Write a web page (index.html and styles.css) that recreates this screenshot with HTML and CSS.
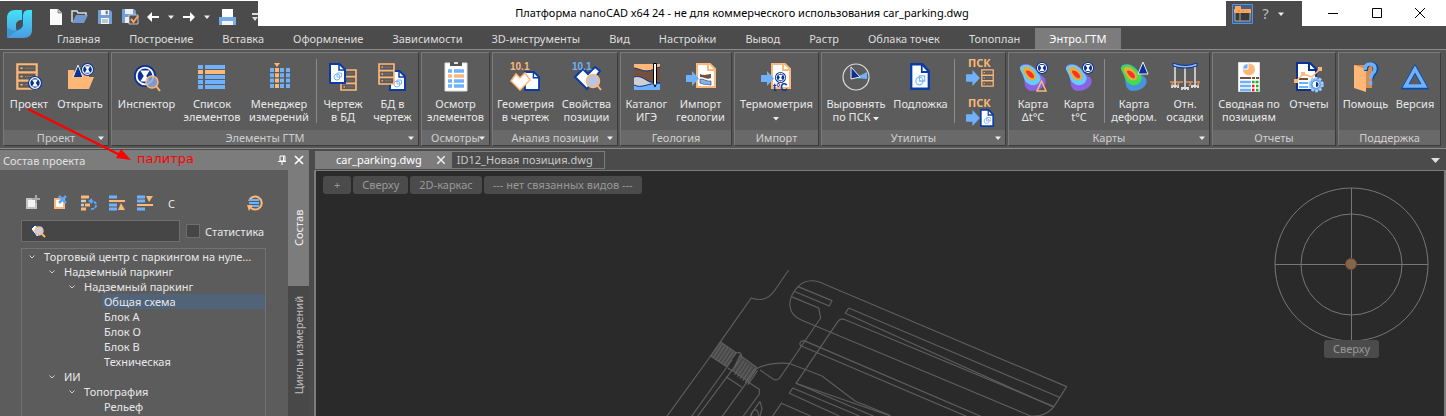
FILE: index.html
```html
<!DOCTYPE html>
<html lang="ru">
<head>
<meta charset="utf-8">
<title>Платформа nanoCAD x64 24</title>
<link rel="stylesheet" href="styles.css">
</head>
<body>
<svg class="sprite" aria-hidden="true">
  <symbol id="glass" viewBox="0 0 14 14"><circle cx="7" cy="7" r="7" fill="#0a3296"/><circle cx="7" cy="7" r="5.3" fill="#0a3296" stroke="#fff" stroke-width="1.2"/><path d="M4 3.5h6L7.8 7 10 10.500H4L6.200 7z" fill="#fff"/></symbol>
  <symbol id="drawers" viewBox="0 0 20 26" preserveAspectRatio="none"><path d="M1.200 1.200h17.600v23.600H1.200zM1 9h18M1 17h18" fill="#5c5c5c" stroke="#fdb777" stroke-width="2"/><path d="M4 5h2M4 13h2M4 21h2" stroke="#fdb777" stroke-width="1.500"/><path d="M8 5h8M8 13h8M8 21h8" stroke="#8a7360" stroke-width="1"/></symbol>
  <symbol id="sheet" viewBox="0 0 17 21" preserveAspectRatio="none"><path d="M1 1h9.500L16 6.500V20H1z" fill="#fff" stroke="#0a3ca5" stroke-width="2"/><path d="M10 1v6h6" fill="none" stroke="#0a3ca5" stroke-width="1.500"/></symbol>
  <symbol id="plot" viewBox="0 0 17 21" preserveAspectRatio="none"><use href="#sheet" width="17" height="21"/><circle cx="8" cy="14" r="3" fill="none" stroke="#7ab6ff"/><path d="M8 14v-4h4.500v4z" fill="none" stroke="#7ab6ff"/></symbol>
  <symbol id="arrow" viewBox="0 0 13 15"><path d="M0 4h6V0l7 7.500L6 15v-4H0z" fill="#6fb1fb"/></symbol>
  <symbol id="tri" viewBox="0 0 6 4"><path d="M0 .5h6L3 4z" fill="#eee"/></symbol>
  <symbol id="blob" viewBox="0 0 30 30"><path class="b1" d="M3 2C9-1 16 3 20 9c3 5 9 5 8 11s-8 9-15 9c-6-1-7-7-7-12C5 11-1 6 3 2z"/><path class="b2" d="M3 3c6-3 12 0 16 6 4 5 5 6 3 10s-8 5-11 3c-6-4-5-7-7-11S0 5 3 3z"/><path d="M5 5c5-3 8 1 12 5 3 4 1 8-3 8-5 0-5-4-8-7-2-2-2-5-1-6z" fill="#e6ae38"/><path d="M8 8c3-1 8 3 8 6s-3 2-5 0-4-5-3-6z" fill="#f4332b"/></symbol>
  <symbol id="chev" viewBox="0 0 8 6"><path d="M1.500 1.500 4 4l2.500-2.500" fill="none" stroke="#d0d0d0"/></symbol>
</svg>

<header class="titlebar">
  <div class="quick">
    <button aria-label="Создать"><svg width="14" height="18" viewBox="0 0 14 18"><path d="M1 1h8l4 4v12H1z" fill="#fafafa"/><path d="M9 1v4h4" fill="#bbb" stroke="#777" stroke-width=".7"/></svg></button>
    <button aria-label="Открыть файл"><svg width="18" height="16" viewBox="0 0 18 16"><path d="M1 13V2h5l1 2h8v3" fill="none" stroke="#ddd" stroke-width="1.500"/><path d="M1 14 5 6h12l-4 8z" fill="#7098ca"/></svg></button>
    <button aria-label="Сохранить"><svg width="16" height="16" viewBox="0 0 16 16"><path d="M1 1h12l2 2v12H1z" fill="#719fd9"/><path d="M4 1h8v5H4zM4 9h8v6H4z" fill="#f5f5f5"/><path d="M9 2h1.500v3H9zM5 11h6M5 13h6" fill="#345" stroke="#89a"/></svg></button>
    <button aria-label="Сохранить как"><svg width="18" height="18" viewBox="0 0 18 18"><path d="M1 1h12l2 2v12H1z" fill="#719fd9"/><path d="M4 1h8v5H4zM4 9h5v6H4z" fill="#eee"/><path d="M8 7h9v9H8z" fill="#505050" stroke="#ddd" stroke-width=".8"/><path d="m10 11 2.500 3L17 8" fill="none" stroke="#f4a45f" stroke-width="2"/></svg></button>
    <button aria-label="Отменить"><svg width="12" height="10" viewBox="0 0 12 10"><path d="M12 4H5V0L0 5l5 5V6h7z" fill="#fff"/></svg></button>
    <button aria-label="Список отмены"><svg width="6" height="4"><use href="#tri"/></svg></button>
    <button aria-label="Повторить"><svg width="12" height="10" viewBox="0 0 12 10"><path d="M0 4h7V0l5 5-5 5V6H0z" fill="#fff"/></svg></button>
    <button aria-label="Список повтора"><svg width="6" height="4"><use href="#tri"/></svg></button>
    <button aria-label="Печать"><svg width="17" height="17" viewBox="0 0 17 17"><path d="M3 0h11v8H3z" fill="#fff"/><path d="M0 8h17v8H0z" fill="#78a9e8"/><path d="M3 12h11v4H3z" fill="#f4f4f4"/></svg></button>
    <button class="more" aria-label="Настроить панель"><svg width="6" height="8" viewBox="0 0 6 8"><path d="M0 0h6v2H0zM0 4h6L3 8z" fill="#ddd"/></svg></button>
  </div>
  <h1>Платформа nanoCAD x64 24 - не для коммерческого использования car_parking.dwg</h1>
  <div class="helpbox">
    <button aria-label="Вид ленты"><svg width="21" height="20" viewBox="0 0 21 20"><path d="M.5.5h20v19H.5z" fill="#4b5d78" stroke="#4c93f0"/><path d="M3 8h15v9H3zM8 8v9" fill="#3a3a3a" stroke="#aaa"/><path d="M2 5h17v4H2zM3 2h6v3H3z" fill="#fba760"/><path d="M6 7h9" stroke="#b86" stroke-dasharray="2"/></svg></button>
    <button class="ask" aria-label="Справка">?</button>
    <button aria-label="Меню справки"><svg width="6" height="4"><use href="#tri"/></svg></button>
  </div>
  <div class="winctl">
    <button aria-label="Свернуть"><svg width="12" height="12"><path d="M1 6.500h10" stroke="#000"/></svg></button>
    <button aria-label="Развернуть"><svg width="12" height="12"><path d="M1.500 1.500h9v9h-9z" fill="none" stroke="#000"/></svg></button>
    <button aria-label="Закрыть"><svg width="12" height="12"><path d="m1 1 10 10M11 1 1 11" stroke="#000"/></svg></button>
  </div>
</header>

<nav class="menu">
  <svg class="logo" width="26" height="28" viewBox="0 0 26 28"><defs><linearGradient id="lg" x1="0" y1="0" x2="0" y2="28" gradientUnits="userSpaceOnUse"><stop offset="0" stop-color="#43e2f7"/><stop offset="1" stop-color="#4c9ae0"/></linearGradient></defs><path d="M8 0h7v10c-4 0-6 2-6 5v3c0 2 1 3 2 4L0 28V8c0-5 3-8 8-8z" fill="url(#lg)"/><path d="M0 28h16c6 0 9-3 9-8V0h-3c-4 0-6 2-6 6v8c0 3-2 5-5 6z" fill="url(#lg)"/><path d="m15 0 1 6v8c0 3-2 5-5 6l-2-2h2c3 0 4-2 4-5z" fill="#1f5f94"/><path d="m11 20-11 8V17c3 3 7 4 11 3z" fill="#2f86c0" opacity=".5"/></svg>
  <a href="#">Главная</a><a href="#">Построение</a><a href="#">Вставка</a><a href="#">Оформление</a><a href="#">Зависимости</a><a href="#">3D-инструменты</a><a href="#">Вид</a><a href="#">Настройки</a><a href="#">Вывод</a><a href="#">Растр</a><a href="#">Облака точек</a><a href="#">Топоплан</a><a href="#" class="on">Энтро.ГТМ</a>
</nav>

<div class="ribbon">
  <section class="group">
    <div class="tools g-project">
      <button><svg class="ico" viewBox="0 0 30 30"><use href="#drawers" x="2" y="1" width="22" height="27"/><use href="#glass" x="14" y="14" width="14" height="14"/></svg>Проект</button>
      <button><svg class="ico" viewBox="0 0 30 30"><path d="M3 27V8h6l1 3h14v5" fill="#fdb777"/><path d="m7 18 6-15 6 15z" fill="#0a3296" stroke="#eee"/><use href="#glass" x="16" y="1" width="13" height="13"/><path d="M3 27 8 15h21l-5 12z" fill="#fdb777"/></svg>Открыть</button>
    </div>
    <h2>Проект<svg class="dd" width="6" height="4"><use href="#tri"/></svg></h2>
  </section>
  <section class="group">
    <div class="tools g-elements">
      <button><svg class="ico" viewBox="0 0 30 30"><use href="#glass" x="3" y="3" width="22" height="22"/><circle cx="21" cy="20" r="6" fill="#8ea6d8" fill-opacity=".85" stroke="#fdb777" stroke-width="1.500"/><path d="m25 24 4 5" stroke="#fdb777" stroke-width="2"/></svg>Инспектор</button>
      <button><svg class="ico" viewBox="0 0 30 30"><path d="M1 5h5m2 0h20M1 15h5m2 0h20M1 20h5m2 0h20M1 25h5m2 0h20" stroke="#6fb1fb" stroke-width="4"/><path d="M1 10h5m2 0h20" stroke="#fdb777" stroke-width="4"/></svg>Список<br>элементов</button>
      <button><svg class="ico" viewBox="0 0 30 30"><path d="M8 6v20M18 6v20M24 6v20" stroke="#6fb1fb" stroke-width="4" stroke-dasharray="4 1.300"/><path d="M13 6v20" stroke="#fdb777" stroke-width="4" stroke-dasharray="4 1.300"/><path d="M10 1h6l-3 4z" fill="#fdb777"/></svg>Менеджер<br>измерений</button>
      <i class="sep"></i>
      <button><svg class="ico" viewBox="0 0 30 30"><use href="#drawers" x="12" y="7" width="17" height="22"/><use href="#plot" x="1" y="1" width="17" height="21"/></svg>Чертеж<br>в БД</button>
      <button><svg class="ico" viewBox="0 0 30 30"><use href="#plot" x="12" y="8" width="17" height="21"/><use href="#drawers" x="1" y="1" width="17" height="22"/></svg>БД в<br>чертеж</button>
    </div>
    <h2>Элементы ГТМ<svg class="dd" width="6" height="4"><use href="#tri"/></svg></h2>
  </section>
  <section class="group">
    <div class="tools">
      <button><svg class="ico" viewBox="0 0 30 30"><path d="M4 1h22v28H4z" fill="#fff" stroke="#ddd"/><path d="M9 0h12v4H9z" fill="#555"/><path d="M13 0h4v2h-4z" fill="#ddd"/><path d="M7 9h4m2 0h10M7 19h4m2 0h10M7 24h4m2 0h10" stroke="#6fb1fb" stroke-width="3.500"/><path d="M7 14h4m2 0h10" stroke="#fdb777" stroke-width="3.500"/></svg>Осмотр<br>элементов</button>
    </div>
    <h2>Осмотры<svg class="dd" width="6" height="4"><use href="#tri"/></svg></h2>
  </section>
  <section class="group">
    <div class="tools g-analysis">
      <button><svg class="ico" viewBox="0 0 30 30"><use href="#sheet" x="14" y="9" width="16" height="20"/><path d="m1 19 5-7 4 4 5-5 5 7-10 10z" fill="#fff" stroke="#fdb777" stroke-width="1.500"/><text x="0" y="8" class="num or">10.1</text></svg>Геометрия<br>в чертеж</button>
      <button><svg class="ico" viewBox="0 0 30 30"><path d="m3 15 8-8 5 5 7-7 5 4-13 18z" fill="#fff" stroke="#0a3ca5" stroke-width="2"/><text x="0" y="8" class="num bl">10.1</text><circle cx="21" cy="19" r="6.500" fill="#b8c6e4" stroke="#fdb777" stroke-width="1.500"/><path d="m25 23 4 5" stroke="#fdb777" stroke-width="2"/></svg>Свойства<br>позиции</button>
    </div>
    <h2>Анализ позиции<svg class="dd" width="6" height="4"><use href="#tri"/></svg></h2>
  </section>
  <section class="group">
    <div class="tools g-geology">
      <button><svg class="ico" viewBox="0 0 30 30"><path d="M2 2h26v10H2z" fill="#fdb777"/><path d="M2 6c6 1 8 3 13 3s8-3 13-4v14H2z" fill="#74513a"/><path d="M2 15c7-2 11 3 16 5l10 1v7H2z" fill="#d0d0d0"/><path d="M2 23c8 4 13-2 26-2v7H2z" fill="#6fb1fb"/><path d="M2 6c6 1 8 3 13 3s8-3 13-4M2 15c7-2 11 3 16 5l10 1M2 23c8 4 13-2 26-2" fill="none" stroke="#0a3296"/><path d="M21.500 1.500h3v20L23 25l-1.500-3.500z" fill="#fff" stroke="#000"/></svg>Каталог<br>ИГЭ</button>
      <button><svg class="ico" viewBox="0 0 30 30"><path d="M11 2h13l5 5v18H11z" fill="#fff" stroke="#fdb777" stroke-width="2"/><path d="M22 2v6h6" fill="none" stroke="#fdb777" stroke-width="2"/><path d="M14 12c5 2 7 0 11 0v4c-4 2-7-1-11-1z" fill="#74513a"/><path d="M14 17c5 0 7 3 11 2v4c-4-1-7 0-11-2z" fill="#8fb5dc" stroke="#0a3296" stroke-width=".6"/><use href="#arrow" x="0" y="8" width="13" height="17"/></svg>Импорт<br>геологии</button>
    </div>
    <h2>Геология</h2>
  </section>
  <section class="group">
    <div class="tools">
      <button><svg class="ico" viewBox="0 0 30 30"><path d="M11 2h13l5 5v19H11z" fill="#fff" stroke="#fdb777" stroke-width="2"/><path d="M22 2v6h6" fill="none" stroke="#fdb777" stroke-width="2"/><use href="#arrow" x="0" y="8" width="13" height="17"/><use href="#glass" x="14" y="10" width="11" height="11"/><text x="12" y="29" class="num nv">t°C</text></svg>Термометрия<br><svg width="6" height="5"><use href="#tri"/></svg></button>
    </div>
    <h2>Импорт</h2>
  </section>
  <section class="group">
    <div class="tools g-utils">
      <button><svg class="ico" viewBox="0 0 30 30"><circle cx="15" cy="15" r="13" fill="none" stroke="#ddd" stroke-width="1.200"/><path d="m14 16 12-6v7z" fill="#6fb1fb"/><path d="m10 5 9 10-9 2z" fill="#0a3296" stroke="#eee"/></svg>Выровнять<br>по ПСК <svg width="6" height="5"><use href="#tri"/></svg></button>
      <button><svg class="ico" viewBox="0 0 30 30"><use href="#plot" x="5" y="1" width="20" height="27"/></svg>Подложка</button>
      <i class="sep"></i>
      <div class="pair">
        <button aria-label="ПСК в БД"><svg width="30" height="32" viewBox="0 0 30 32"><text x="3" y="11" class="psk">ПСК</text><use href="#drawers" x="16" y="13" width="13" height="18"/><use href="#arrow" x="1" y="14" width="14" height="16"/></svg></button>
        <button aria-label="ПСК в чертеж"><svg width="30" height="32" viewBox="0 0 30 32"><text x="3" y="11" class="psk">ПСК</text><use href="#plot" x="15" y="13" width="14" height="18"/><use href="#arrow" x="1" y="14" width="14" height="16"/></svg></button>
      </div>
    </div>
    <h2>Утилиты<svg class="dd" width="6" height="4"><use href="#tri"/></svg></h2>
  </section>
  <section class="group">
    <div class="tools g-maps">
      <button><svg class="ico cool" viewBox="0 0 30 30"><use href="#blob" x="0" y="1" width="30" height="29"/><use href="#glass" x="18" y="0" width="12" height="12"/><path d="m23.500 19 4.500 10h-9z" fill="none" stroke="#fdb777" stroke-width="1.500"/></svg>Карта<br>Δt°C</button>
      <button><svg class="ico cool" viewBox="0 0 30 30"><use href="#blob" x="0" y="1" width="30" height="29"/><use href="#glass" x="18" y="0" width="12" height="12"/></svg>Карта<br>t°C</button>
      <i class="sep"></i>
      <button><svg class="ico warm" viewBox="0 0 30 30"><use href="#blob" x="0" y="1" width="30" height="29"/><path d="m24 0 5 12H19z" fill="#0a3296" stroke="#eee"/></svg>Карта<br>деформ.</button>
      <button><svg class="ico" viewBox="0 0 30 30"><path d="M5 2v24M15 4v24M25 2v24" stroke="#c4c4c4" stroke-width="2"/><path d="M3 1q12 5 24 0v3q-12 4-24 0z" fill="#8fbfff" stroke="#0a3296"/><path d="M2 26v-2h6v2M12 28v-2h6v2M22 26v-2h6v2" fill="none" stroke="#ddd" stroke-width="2"/><path d="M0 20h4m2 0h7m3 0h7m3 0h4M1 24l2-3m4 3 2-3m10 3 2-3m6 3 2-3" stroke="#d8935a" stroke-width="1.500"/></svg>Отн.<br>осадки</button>
    </div>
    <h2>Карты<svg class="dd" width="6" height="4"><use href="#tri"/></svg></h2>
  </section>
  <section class="group">
    <div class="tools g-reports">
      <button><svg class="ico" viewBox="0 0 30 30"><path d="M4.500.5h21v29h-21z" fill="#fff" stroke="#ddd"/><circle cx="15" cy="7.500" r="6" fill="#fdb777"/><path d="M14 7V1.500A6 6 0 0 0 8.500 7z" fill="#6fb1fb" stroke="#fff"/><path d="M6 16h11m1 0h3m1 0h3" stroke="#74513a" stroke-width="2"/><path d="M6 20h11M6 24h11M6 28h11" stroke="#6fb1fb" stroke-width="2.500"/><path d="M18 20h2.500m1 0h3M22 24h2.500M22 28h2.500" stroke="#1fae2f" stroke-width="2.500"/><path d="M18 24h2.500m-2.500 4h2.500" stroke="#ef1b1b" stroke-width="2.500"/></svg>Сводная по<br>позициям</button>
      <button><svg class="ico" viewBox="0 0 30 30"><path d="M3 1h13l6 6v21H3z" fill="#fff" stroke="#0a3296" stroke-width="2"/><path d="M15 1v7h7" fill="none" stroke="#0a3296" stroke-width="2"/><path d="M5 17h9" stroke="#74513a" stroke-width="2"/><path d="M5 21h9M5 25h9" stroke="#6fb1fb" stroke-width="2"/><path d="m2 19 7-7 9 3 8-8" fill="none" stroke="#fdb777" stroke-width="1.500"/><path d="M0 17h4v4H0zM7 10h4v4H7zM24 5h4v4h-4z" fill="#fdb777"/><circle cx="22" cy="22.500" r="6.500" fill="#6fb1fb" stroke="#a9cfff" stroke-width="2.500" stroke-dasharray="2.500 1.600"/><circle cx="22" cy="22.500" r="4" fill="#fff" stroke="#4e94e8"/><path d="M22 20a2.500 2.500 0 0 1 0 5z" fill="#0a3296"/></svg>Отчеты</button>
    </div>
    <h2>Отчеты</h2>
  </section>
  <section class="group">
    <div class="tools g-support">
      <button><svg class="ico" viewBox="0 0 30 30"><path d="M4 3h18v23H4z" fill="#d98d4a"/><path d="m4 3 12 4v23L4 26z" fill="#fdb777"/><path d="M16 9q0-7 5-7 5.500 0 5.500 5c0 4-4.500 4-4.500 10" fill="none" stroke="#0a4aac" stroke-width="4"/><path d="M15 8q0-6 5-6 5 0 5 5c0 4-4.500 4-4.500 10m0 2v4" fill="none" stroke="#6fb1fb" stroke-width="3.500"/></svg>Помощь</button>
      <button><svg class="ico" viewBox="0 0 30 30"><path d="m15 7 10 18H5z" fill="none" stroke="#0a4aac" stroke-width="5"/><path d="m15 7 9.500 17h-19z" fill="none" stroke="#6fb1fb" stroke-width="3.500"/></svg>Версия</button>
    </div>
    <h2>Поддержка</h2>
  </section>
</div>

<main class="work">
  <aside class="palette">
    <div class="phead"><span>Состав проекта</span>
      <button aria-label="Закрепить"><svg width="10" height="10"><path d="M3 1h5v5H3zM6.500 1v5M1 6.500h8M5 7v3" fill="none" stroke="#fff"/></svg></button>
      <button aria-label="Закрыть палитру"><svg width="10" height="10"><path d="m1 1 8 8M9 1 1 9" stroke="#fff" stroke-width="1.600"/></svg></button>
    </div>
    <div class="pbody">
      <div class="pmain">
        <div class="ptools">
          <button aria-label="Добавить"><svg width="16" height="16" viewBox="0 0 16 16"><path d="M2 4h9v9H2z" fill="#f4f4f4" stroke="#c4c4c4" stroke-width="2"/><path d="M11 0v8M7 4h8" stroke="#aaa" stroke-width="2"/></svg></button>
          <button aria-label="Удалить"><svg width="16" height="16" viewBox="0 0 16 16"><path d="M2 4h9v9H2z" fill="#fff" stroke="#fdb777" stroke-width="2"/><path d="m6 1 7 7m0-7L6 8" stroke="#5ea6f5" stroke-width="2.500"/></svg></button>
          <button aria-label="Переместить"><svg width="16" height="16" viewBox="0 0 16 16"><path d="M0 2h8M4 10h5M0 14h5" stroke="#fdb777" stroke-width="3"/><path d="M0 6h5M0 10h3" stroke="#ccc" stroke-width="2.500"/><path d="M9 6q6 0 6 4t-5 4" fill="none" stroke="#5ea6f5" stroke-width="2" stroke-dasharray="3 1"/><path d="m7 6 4-3v6z" fill="#5ea6f5"/></svg></button>
          <button aria-label="Свернуть всё"><svg width="16" height="16" viewBox="0 0 16 16"><path d="M0 2h8M0 10h8M0 14h8" stroke="#6fb1fb" stroke-width="3"/><path d="M0 6h16" stroke="#fdb777" stroke-width="2"/><path d="m12 8 4 7H9z" fill="#fdb777"/></svg></button>
          <button aria-label="Развернуть всё"><svg width="16" height="16" viewBox="0 0 16 16"><path d="M0 2h8M0 6h8M0 14h8" stroke="#6fb1fb" stroke-width="3"/><path d="M0 10h16" stroke="#fdb777" stroke-width="2"/><path d="M9 1h7l-4 6z" fill="#fdb777"/></svg></button>
          <button class="c">C</button>
          <button class="sync" aria-label="Обновить"><svg width="16" height="16" viewBox="0 0 16 16"><path d="M2 6a6.500 6.500 0 1 1 1 6" fill="none" stroke="#fdb777" stroke-width="2"/><path d="m0 10 6 0-4 6z" fill="#fdb777"/><path d="M2 5h10M2 8h10M5 11h7" stroke="#6fb1fb" stroke-width="2"/></svg></button>
        </div>
        <div class="search">
          <div class="field"><svg width="16" height="14" viewBox="0 0 16 14"><path d="m1 5 4-4 3 2 4-1 2 4-7 7z" fill="#fff" stroke="#0a3ca5"/><circle cx="9" cy="7" r="4" fill="#c5cfe2" stroke="#fdb777" stroke-width="1.500"/><path d="m12 10 3 3" stroke="#fdb777" stroke-width="2"/></svg><input type="text" aria-label="Поиск"></div>
          <label><input type="checkbox">Статистика</label>
        </div>
        <ul class="tree">
          <li class="l0"><svg width="8" height="6"><use href="#chev"/></svg><span>Торговый центр с паркингом на нуле...</span></li>
          <li class="l1"><svg width="8" height="6"><use href="#chev"/></svg><span>Надземный паркинг</span></li>
          <li class="l2"><svg width="8" height="6"><use href="#chev"/></svg><span>Надземный паркинг</span></li>
          <li class="l3"><span class="sel">Общая схема</span></li>
          <li class="l3"><span>Блок А</span></li>
          <li class="l3"><span>Блок О</span></li>
          <li class="l3"><span>Блок В</span></li>
          <li class="l3"><span>Техническая</span></li>
          <li class="l1"><svg width="8" height="6"><use href="#chev"/></svg><span>ИИ</span></li>
          <li class="l2"><svg width="8" height="6"><use href="#chev"/></svg><span>Топография</span></li>
          <li class="l3"><span>Рельеф</span></li>
        </ul>
      </div>
      <div class="side"><button class="on">Состав</button><button>Циклы измерений</button></div>
    </div>
  </aside>

  <section class="docs">
    <div class="doctabs">
      <button class="on">car_parking.dwg<svg width="8" height="8"><path d="m0 0 8 8M8 0 0 8" stroke="#eee" stroke-width="1.500"/></svg></button>
      <button>ID12_Новая позиция.dwg</button>
      <svg class="list" width="9" height="5" viewBox="0 0 9 5"><path d="M0 0h9L4.500 5z" fill="#e0e0e0"/></svg>
    </div>
    <div class="canvas">
      <svg class="plan" aria-hidden="true">
        <g transform="translate(344 89) scale(.3333)" fill="none" stroke="#5e5e5e" stroke-width="3.500">
          <path d="m182 246 46 32-28 42-48-32zM240 286l50 36-26 42-46-32z" fill="#484848"/>
          <path d="M386 30 345 90Q318 130 274 114L182 244 152 288 20 470M264 366l34 22v14l-48 66M290 326 186 470M216 300 94 470M236 304 112 470M198 350l48 32M204 324l14 10"/>
          <path d="m188 250-28 42m36-36-28 42m36-36-28 42m36-36-28 42m36-36-28 42m60-14-28 42m36-36-28 42m36-36-28 42m36-36-28 42m36-36-28 42m36-36-28 42" stroke-width="4"/>
          <path d="M222 290c6-18 26-16 22 4l-20 30"/>
          <path d="M290 326Q330 306 386 310 440 330 486 348L586 424 690 466M300 330l40 28q10 4 18-2L482 174l-6-30-82-34"/>
          <path d="M1220 380 478 66Q438 54 414 80 386 110 390 140 394 168 424 180L1112 468Q1156 472 1182 440L1220 380zM414 80l102 42-8 16-106-44M566 144 1198 412M566 144l-10 16 626 282"/>
          <path d="M1182 440 552 178q-12-2-18 6L408 370 640 468"/>
          <path d="M432 242 965 470M424 258 922 470M432 242c-12 0-16 8-8 18M398 384 598 468M398 384l-10 16 150 68M408 370l284 98M452 468l-88-38-26 38M300 424l6 22-6 22M300 424l-30 42M274 468c4-20 20-28 22 0"/>
        </g>
      </svg>
      <div class="pills"><button>+</button><button>Сверху</button><button>2D-каркас</button><button>--- нет связанных видов ---</button></div>
      <div class="compass">
        <svg width="155" height="155" viewBox="0 0 155 155"><g fill="none" stroke="#777"><circle cx="77.500" cy="77.500" r="76.500"/><circle cx="77.500" cy="77.500" r="50.500"/><path d="M1 77.500h153M77.500 1v153"/></g><circle cx="77" cy="77" r="5.500" fill="#85664d" stroke="#6b4a30"/></svg>
        <button>Сверху</button>
      </div>
    </div>
  </section>

  <div class="note"><svg width="135" height="56" viewBox="0 0 135 56"><path d="m28 4 94 47" stroke="#f00" stroke-width="2.500"/><path d="m131 55-15-2 5-9z" fill="#f00"/></svg><span>палитра</span></div>
</main>
</body>
</html>
```
FILE: styles.css
```css
* { box-sizing: border-box; }
body {
  margin: 0; height: 100vh; display: flex; flex-direction: column; overflow: hidden;
  background: #4b4b4b; color: #e8e8e8;
  font: 11px/15px "Noto Sans", "Open Sans", sans-serif;
}
button { font: inherit; color: inherit; background: none; border: 0; padding: 0; margin: 0; }
a { color: inherit; text-decoration: none; }
h1, h2, ul { margin: 0; padding: 0; font: inherit; list-style: none; }
svg { flex: none; }
.sprite { position: absolute; width: 0; height: 0; }

.titlebar { display: flex; height: 26px; flex: none; padding-top: 1px; background: #fff; color: #000; }
.quick { display: flex; align-items: center; gap: 9px; width: 258px; padding: 7px 0 0 49px; background: #4b4b4b; }
.quick button { display: flex; margin-right: -1px; }
.quick button:nth-child(n+5) { margin-right: 0; }
.quick .more { margin-left: auto; }
.titlebar h1 { flex: 1; text-align: center; line-height: 23px; white-space: nowrap; }
.helpbox { display: flex; align-items: center; justify-content: space-between; width: 76px; padding: 0 18px 0 6px; background: #4b4b4b; }
.helpbox button { display: flex; }
.helpbox .ask { font-size: 15px; color: #bbb; }
.winctl { display: flex; align-items: center; justify-content: space-between; width: 144px; padding: 0 20px 2px 25px; }
.winctl button { display: flex; }

.menu { display: flex; flex: none; height: 23px; padding: 2px 0 0 42px; position: relative; }
.menu a { padding: 0 15px 0 14px; line-height: 21px; white-space: nowrap; color: #dedede; }
.menu a:first-of-type { padding-left: 15px; }
.menu .on { background: #7c7c7c; color: #fff; }
.logo { position: absolute; left: 7px; top: -16px; }

.ribbon {
  display: grid; flex: none; gap: 2px; padding: 2px 5px 2px 3px;
  grid-template-columns: 106fr 308fr 69fr 126fr 112fr 85fr 185fr 202fr 124fr 103fr;
  border-top: 1px solid #8c8c8c; border-bottom: 1px solid #8c8c8c; background: #555;
}
.group { display: flex; flex-direction: column; min-width: 0; background: #5c5c5c; border: 1px solid #7a7a7a; border-right: 1px solid #3c3c3c; border-bottom: 1px solid #3c3c3c; }
.tools { display: grid; grid-template-columns: minmax(0, 1fr); height: 77px; padding: 0 1px; }
.tools > button { padding-top: 9px; line-height: 13px; white-space: nowrap; text-align: center; align-self: start; justify-self: center; }
.ico { display: block; width: 30px; height: 30px; margin: 0 auto 5px; overflow: visible; }
.g-project { grid-template-columns: 48fr 54fr; }
.g-elements { grid-template-columns: minmax(0, 67fr) minmax(0, 64fr) minmax(0, 70fr) 4fr minmax(0, 50fr) minmax(0, 49fr); }
.g-analysis { grid-template-columns: minmax(0, 63fr) minmax(0, 59fr); }
.g-geology { grid-template-columns: minmax(0, 49fr) minmax(0, 59fr); }
.g-utils { grid-template-columns: minmax(0, 66fr) minmax(0, 63fr) 4fr minmax(0, 48fr); }
.g-maps { grid-template-columns: minmax(0, 46fr) minmax(0, 46fr) 4fr minmax(0, 56fr) minmax(0, 46fr); }
.g-reports { grid-template-columns: minmax(0, 70fr) minmax(0, 50fr); }
.g-support { grid-template-columns: minmax(0, 51fr) minmax(0, 48fr); }
.sep { width: 1px; background: #8c8c8c; margin: 6px 0 7px 2px; }
.pair { display: flex; flex-direction: column; align-items: center; gap: 8px; padding-top: 3px; }
.pair button { display: flex; }
.pair svg { overflow: visible; }
.group h2 { position: relative; height: 15px; line-height: 15px; text-align: center; background: #696969; color: #cfcfcf; white-space: nowrap; }
.dd { position: absolute; right: 4px; top: 6px; }
.num { font: bold 10px "Liberation Sans", sans-serif; }
.psk { font: bold 11px "Open Sans", sans-serif; fill: #fdb777; }
.or { fill: #fdb777; }
.bl { fill: #6fb1fb; }
.nv { fill: #0a3296; }
.cool { --outer: #8b63e6; --inner: #66ccfb; }
.warm { --outer: #4794dd; --inner: #43dc4c; }
.b1 { fill: var(--outer); }
.b2 { fill: var(--inner); }

.work { display: flex; flex: 1; min-height: 0; padding-top: 1px; position: relative; }
.palette { display: flex; flex-direction: column; width: 309px; flex: none; }
.phead { display: flex; align-items: center; gap: 7px; height: 20px; padding: 0 5px 0 3px; background: #7c7c7c; color: #e0e0e0; }
.phead span { flex: 1; }
.phead button { display: flex; }
.pbody { display: flex; flex: 1; min-height: 0; }
.pmain { display: flex; flex-direction: column; flex: 1; padding: 24px 22px 0 21px; background: #5c5c5c; min-width: 0; }
.ptools { display: flex; align-items: center; gap: 12px; padding: 0 3px 0 4px; height: 18px; }
.ptools button { display: flex; }
.ptools .c { padding-left: 3px; }
.ptools .sync { margin-left: auto; }
.search { display: flex; align-items: center; gap: 6px; margin-top: 8px; }
.field { display: flex; align-items: center; width: 159px; height: 22px; padding-left: 8px; background: #464646; border: 1px solid #6e6e6e; }
.field input { flex: 1; min-width: 0; border: 0; background: none; color: inherit; font: inherit; outline: 0; }
.search label { display: flex; align-items: center; gap: 5px; }
.search label input { appearance: none; width: 14px; height: 14px; margin: 0; background: #464646; border: 1px solid #6e6e6e; }
.tree { flex: 1; min-height: 0; margin-top: 6px; overflow: hidden; border: 1px solid #727272; border-bottom: 0; }
.tree li { display: flex; align-items: center; gap: 6px; height: 15px; white-space: nowrap; }
.tree span { flex: 1; padding-left: 2px; }
.l0 { padding-left: 6px; }
.l1 { padding-left: 26px; }
.l2 { padding-left: 46px; }
.l3 { padding-left: 80px; }
.sel { background: #516378; }
.side { display: flex; flex-direction: column; width: 21px; background: #484848; }
.side button { writing-mode: vertical-rl; transform: rotate(180deg); line-height: 21px; padding: 10px 0; color: #bdbdbd; text-align: right; white-space: nowrap; }
.side .on { height: 116px; padding: 40px 0 0; background: #7c7c7c; color: #f0f0f0; text-align: left; }

.docs { display: flex; flex-direction: column; flex: 1; min-width: 0; padding-left: 5px; }
.doctabs { display: flex; align-items: center; height: 20px; padding: 0 6px 0 1px; }
.doctabs button { height: 18px; padding: 0 11px 0 5px; border: 1px solid #7c7c7c; color: #c8c8c8; line-height: 16px; white-space: nowrap; }
.doctabs .on { display: flex; align-items: center; gap: 15px; padding: 0 5px 0 20px; background: #7c7c7c; color: #fff; }
.list { margin-left: auto; }
.canvas { position: relative; flex: 1; min-height: 0; overflow: hidden; background: #2a2a2a; border: solid #7c7c7c; border-width: 1px 2px 0; }
.plan { position: absolute; left: 0; top: 0; width: 100%; height: 100%; }
.pills { position: relative; display: flex; gap: 2px; padding: 5px 7px; }
.pills button, .compass button { padding: 0 9px; line-height: 18px; border-radius: 3px; background: #4b4b4b; color: #999; white-space: nowrap; }
.pills button:first-child { padding: 0 11px; }
.compass { position: absolute; right: 15px; top: 16px; display: flex; flex-direction: column; align-items: center; }
.compass button { margin-top: -2px; }
.note { position: absolute; left: 0; top: -44px; display: flex; align-items: flex-end; gap: 2px; color: #f00; font: 13px/20px "DejaVu Sans", sans-serif; pointer-events: none; }
.note span { margin-bottom: -8px; }
```
